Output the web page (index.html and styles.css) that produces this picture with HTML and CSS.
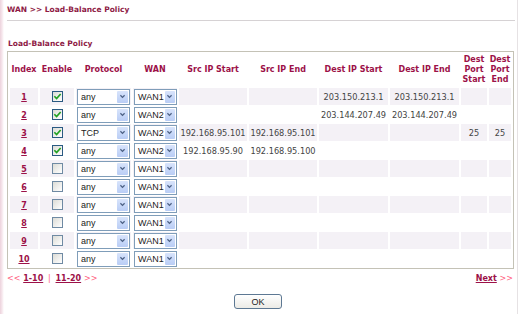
FILE: index.html
```html
<!DOCTYPE html>
<html lang="en">
<head>
    <meta charset="UTF-8">
    <title>WAN &gt;&gt; Load-Balance Policy</title>
    <link rel="stylesheet" href="styles.css">
</head>
<body>
<div class="page">
    <h1 class="title">WAN &gt;&gt; Load-Balance Policy</h1>
    <h2 class="subtitle">Load-Balance Policy</h2>

    <table class="policy">
        <colgroup>
            <col class="w-idx"><col class="w-en"><col class="w-proto"><col class="w-wan">
            <col class="w-ip"><col class="w-ip"><col class="w-ip2"><col class="w-ip2">
            <col class="w-ps"><col class="w-pe">
        </colgroup>
        <thead>
            <tr>
                <th>Index</th>
                <th>Enable</th>
                <th>Protocol</th>
                <th>WAN</th>
                <th>Src IP Start</th>
                <th>Src IP End</th>
                <th>Dest IP Start</th>
                <th>Dest IP End</th>
                <th>Dest<br>Port<br>Start</th>
                <th>Dest<br>Port<br>End</th>
            </tr>
        </thead>
        <tbody>
            <tr class="odd">
                <td><a href="#">1</a></td>
                <td><span class="chk on"><svg viewBox="0 0 8 8"><polyline points="1.2,3.8 3.2,5.8 6.8,1.8"/></svg></span></td>
                <td><span class="sel proto"><span class="val">any</span><span class="btn"><svg viewBox="0 0 8 6"><polyline points="1.5,1.5 4,4 6.5,1.5"/></svg></span></span></td>
                <td><span class="sel wan"><span class="val">WAN1</span><span class="btn"><svg viewBox="0 0 8 6"><polyline points="1.5,1.5 4,4 6.5,1.5"/></svg></span></span></td>
                <td></td>
                <td></td>
                <td>203.150.213.1</td>
                <td>203.150.213.1</td>
                <td></td>
                <td></td>
            </tr>
            <tr>
                <td><a href="#">2</a></td>
                <td><span class="chk on"><svg viewBox="0 0 8 8"><polyline points="1.2,3.8 3.2,5.8 6.8,1.8"/></svg></span></td>
                <td><span class="sel proto"><span class="val">any</span><span class="btn"><svg viewBox="0 0 8 6"><polyline points="1.5,1.5 4,4 6.5,1.5"/></svg></span></span></td>
                <td><span class="sel wan"><span class="val">WAN2</span><span class="btn"><svg viewBox="0 0 8 6"><polyline points="1.5,1.5 4,4 6.5,1.5"/></svg></span></span></td>
                <td></td>
                <td></td>
                <td>203.144.207.49</td>
                <td>203.144.207.49</td>
                <td></td>
                <td></td>
            </tr>
            <tr class="odd">
                <td><a href="#">3</a></td>
                <td><span class="chk on"><svg viewBox="0 0 8 8"><polyline points="1.2,3.8 3.2,5.8 6.8,1.8"/></svg></span></td>
                <td><span class="sel proto"><span class="val">TCP</span><span class="btn"><svg viewBox="0 0 8 6"><polyline points="1.5,1.5 4,4 6.5,1.5"/></svg></span></span></td>
                <td><span class="sel wan"><span class="val">WAN2</span><span class="btn"><svg viewBox="0 0 8 6"><polyline points="1.5,1.5 4,4 6.5,1.5"/></svg></span></span></td>
                <td>192.168.95.101</td>
                <td>192.168.95.101</td>
                <td></td>
                <td></td>
                <td>25</td>
                <td>25</td>
            </tr>
            <tr>
                <td><a href="#">4</a></td>
                <td><span class="chk on"><svg viewBox="0 0 8 8"><polyline points="1.2,3.8 3.2,5.8 6.8,1.8"/></svg></span></td>
                <td><span class="sel proto"><span class="val">any</span><span class="btn"><svg viewBox="0 0 8 6"><polyline points="1.5,1.5 4,4 6.5,1.5"/></svg></span></span></td>
                <td><span class="sel wan"><span class="val">WAN2</span><span class="btn"><svg viewBox="0 0 8 6"><polyline points="1.5,1.5 4,4 6.5,1.5"/></svg></span></span></td>
                <td>192.168.95.90</td>
                <td>192.168.95.100</td>
                <td></td>
                <td></td>
                <td></td>
                <td></td>
            </tr>
            <tr class="odd">
                <td><a href="#">5</a></td>
                <td><span class="chk"></span></td>
                <td><span class="sel proto"><span class="val">any</span><span class="btn"><svg viewBox="0 0 8 6"><polyline points="1.5,1.5 4,4 6.5,1.5"/></svg></span></span></td>
                <td><span class="sel wan"><span class="val">WAN1</span><span class="btn"><svg viewBox="0 0 8 6"><polyline points="1.5,1.5 4,4 6.5,1.5"/></svg></span></span></td>
                <td></td><td></td><td></td><td></td><td></td><td></td>
            </tr>
            <tr>
                <td><a href="#">6</a></td>
                <td><span class="chk"></span></td>
                <td><span class="sel proto"><span class="val">any</span><span class="btn"><svg viewBox="0 0 8 6"><polyline points="1.5,1.5 4,4 6.5,1.5"/></svg></span></span></td>
                <td><span class="sel wan"><span class="val">WAN1</span><span class="btn"><svg viewBox="0 0 8 6"><polyline points="1.5,1.5 4,4 6.5,1.5"/></svg></span></span></td>
                <td></td><td></td><td></td><td></td><td></td><td></td>
            </tr>
            <tr class="odd">
                <td><a href="#">7</a></td>
                <td><span class="chk"></span></td>
                <td><span class="sel proto"><span class="val">any</span><span class="btn"><svg viewBox="0 0 8 6"><polyline points="1.5,1.5 4,4 6.5,1.5"/></svg></span></span></td>
                <td><span class="sel wan"><span class="val">WAN1</span><span class="btn"><svg viewBox="0 0 8 6"><polyline points="1.5,1.5 4,4 6.5,1.5"/></svg></span></span></td>
                <td></td><td></td><td></td><td></td><td></td><td></td>
            </tr>
            <tr>
                <td><a href="#">8</a></td>
                <td><span class="chk"></span></td>
                <td><span class="sel proto"><span class="val">any</span><span class="btn"><svg viewBox="0 0 8 6"><polyline points="1.5,1.5 4,4 6.5,1.5"/></svg></span></span></td>
                <td><span class="sel wan"><span class="val">WAN1</span><span class="btn"><svg viewBox="0 0 8 6"><polyline points="1.5,1.5 4,4 6.5,1.5"/></svg></span></span></td>
                <td></td><td></td><td></td><td></td><td></td><td></td>
            </tr>
            <tr class="odd">
                <td><a href="#">9</a></td>
                <td><span class="chk"></span></td>
                <td><span class="sel proto"><span class="val">any</span><span class="btn"><svg viewBox="0 0 8 6"><polyline points="1.5,1.5 4,4 6.5,1.5"/></svg></span></span></td>
                <td><span class="sel wan"><span class="val">WAN1</span><span class="btn"><svg viewBox="0 0 8 6"><polyline points="1.5,1.5 4,4 6.5,1.5"/></svg></span></span></td>
                <td></td><td></td><td></td><td></td><td></td><td></td>
            </tr>
            <tr>
                <td><a href="#">10</a></td>
                <td><span class="chk"></span></td>
                <td><span class="sel proto"><span class="val">any</span><span class="btn"><svg viewBox="0 0 8 6"><polyline points="1.5,1.5 4,4 6.5,1.5"/></svg></span></span></td>
                <td><span class="sel wan"><span class="val">WAN1</span><span class="btn"><svg viewBox="0 0 8 6"><polyline points="1.5,1.5 4,4 6.5,1.5"/></svg></span></span></td>
                <td></td><td></td><td></td><td></td><td></td><td></td>
            </tr>
        </tbody>
    </table>

    <div class="pager">
        <div><span class="arrow">&lt;&lt;</span> <a href="#">1-10</a> <span class="arrow sep">|</span> <a href="#">11-20</a> <span class="arrow">&gt;&gt;</span></div>
        <div><a href="#">Next</a> <span class="arrow">&gt;&gt;</span></div>
    </div>

    <div class="actions">
        <button type="button">OK</button>
    </div>
</div>
</body>
</html>
```

FILE: styles.css
```css
body {
    margin: 0;
    font-family: "DejaVu Sans", Verdana, sans-serif;
    background: linear-gradient(to right, #ecd2dc 0, #f6e6ec 2px, #fff 4px);
    height: 314px;
    overflow: hidden;
}
.page {
    width: 510px;
    height: 314px;
    padding-left: 7px;
    border-right: 1px solid #e6e2e4;
}
.title {
    margin: 0 2px 0 0;
    padding: 5px 0 5px 0;
    font-size: 7.5px;
    line-height: 10px;
    font-weight: bold;
    color: #8e1a44;
    border-bottom: 1px solid #d6d2d4;
}
.subtitle {
    margin: 18px 0 2px 1px;
    font-size: 7.5px;
    line-height: 10px;
    font-weight: bold;
    color: #8e1a44;
}

/* policy table */
.policy {
    width: 507px;
    table-layout: fixed;
    border: 1px solid #c4c2b6;
    border-spacing: 2px 1px;
}
.w-idx { width: 28px; }
.w-en { width: 34px; }
.w-proto { width: 55px; }
.w-wan { width: 44px; }
.w-ip { width: 68px; }
.w-ip2 { width: 69px; }
.w-ps { width: 26px; }
.w-pe { width: 22px; }
.policy th {
    height: 34px;
    padding: 0;
    font-size: 8px;
    line-height: 10px;
    color: #9c1148;
    white-space: nowrap;
    text-align: center;
}
.policy td {
    height: 17px;
    padding: 0;
    font-size: 8.2px;
    color: #444;
    text-align: center;
    white-space: nowrap;
    overflow: visible;
}
.policy tr.odd td { background: #f4f1f6; }
.policy td a {
    font-size: 8px;
    font-weight: bold;
    color: #9c1148;
}

/* xp style checkbox */
.chk {
    display: inline-block;
    width: 9px;
    height: 9px;
    border: 1px solid #6f8aa3;
    background: linear-gradient(135deg, #dcdcd6, #fff);
    vertical-align: middle;
}
.chk.on { border-color: #2a5a82; }
.chk svg {
    display: block;
    width: 9px;
    height: 9px;
    fill: none;
    stroke: #21a121;
    stroke-width: 1.5;
}

/* xp style select */
.sel {
    display: flex;
    height: 14px;
    border: 1px solid #7f9db9;
    background: #fff;
    margin-left: 1px;
    font-family: "Liberation Sans", Arial, sans-serif;
    font-size: 9px;
    color: #222;
    text-align: left;
}
.sel.proto { width: 51px; }
.sel.wan { width: 41px; }
.sel .val {
    flex: 1;
    padding-left: 3px;
    line-height: 14px;
}
.sel .btn {
    width: 11px;
    margin: 1px;
    border-radius: 1px;
    background: linear-gradient(#d8e4fb, #b9cdf5);
    display: flex;
    align-items: center;
    justify-content: center;
}
.sel .btn svg {
    width: 7px;
    height: 5px;
    fill: none;
    stroke: #4d6185;
    stroke-width: 1.5;
}

/* paging */
.pager {
    display: flex;
    justify-content: space-between;
    width: 506px;
    margin-top: 5px;
    font-size: 8px;
    line-height: 10px;
    font-weight: bold;
}
.pager a { color: #9c1148; }
.pager .arrow { color: #ff6080; font-weight: normal; }
.pager .sep { margin: 0 2px; }

.actions {
    display: flex;
    justify-content: center;
    margin-top: 10px;
    padding-right: 8px;
}
.actions button {
    width: 48px;
    height: 15px;
    padding: 0;
    border: 1px solid #5d7893;
    border-radius: 3px;
    background: linear-gradient(#fff, #ecebe6);
    font-family: "Liberation Sans", Arial, sans-serif;
    font-size: 9px;
    color: #222;
}
```
